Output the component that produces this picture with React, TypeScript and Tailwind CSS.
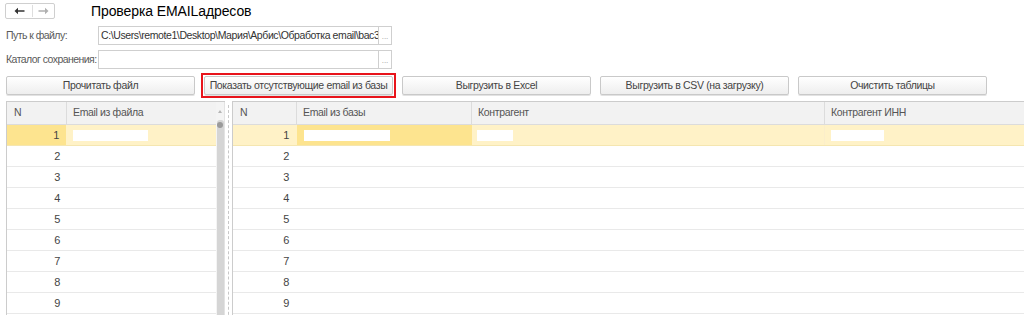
import React from "react";

const rows = [1, 2, 3, 4, 5, 6, 7, 8, 9, 10];

const Arrow = ({ dir, color }: { dir: "left" | "right"; color: string }) => (
  <svg width="11" height="8" viewBox="0 0 11 8">
    {dir === "left" ? (
      <path d="M0.5 4 L4 0.8 L4 3.2 L10.5 3.2 L10.5 4.8 L4 4.8 L4 7.2 Z" fill={color} />
    ) : (
      <path d="M10.5 4 L7 0.8 L7 3.2 L0.5 3.2 L0.5 4.8 L7 4.8 L7 7.2 Z" fill={color} />
    )}
  </svg>
);

const Btn = ({ label }: { label: string }) => (
  <div className="w-[189px] shrink-0 h-[19px] flex items-center justify-center whitespace-nowrap rounded-[2px] border border-[#c9c9c9] bg-gradient-to-b from-white to-[#eeeeee] text-[10.5px] tracking-[-0.35px] text-[#444] shadow-[0_1px_0_#e2e2e2]">
    {label}
  </div>
);

const PathField = ({ label, value }: { label: string; value: string }) => (
  <div className="flex items-center h-[19px]">
    <div className="w-[92px] text-[10.5px] tracking-[-0.55px] text-[#5a5a5a] whitespace-nowrap">{label}</div>
    <div className="w-[281px] h-full border border-[#cfcfcf] flex items-center pl-[2px] overflow-hidden whitespace-nowrap text-[10.5px] tracking-[-0.4px] text-[#333]">
      {value}
    </div>
    <div className="w-[13px] h-full border border-l-0 border-[#cfcfcf] flex items-end justify-center pb-[3px] text-[8px] leading-none text-[#999]">
      ...
    </div>
  </div>
);

const Blank = ({ w }: { w: number }) => (
  <div className="h-[11px] bg-white" style={{ width: w }} />
);

export default function App() {
  return (
    <div
      className="w-[1024px] h-[315px] overflow-hidden bg-white"
      style={{ fontFamily: '"Liberation Sans", Arial, sans-serif' }}
    >
      {/* top bar */}
      <div className="h-[26px] flex items-start pt-[3px] pl-[5px]">
        <div className="w-[50px] h-[16px] border border-[#cfcfcf] rounded-[2px] flex items-center bg-white">
          <div className="w-[27px] flex justify-center border-r border-[#dedede] h-[12px] items-center">
            <Arrow dir="left" color="#333" />
          </div>
          <div className="flex-1 flex justify-center">
            <Arrow dir="right" color="#b0b0b0" />
          </div>
        </div>
        <div className="ml-[36px] -mt-[1px] text-[14px] leading-[18px] tracking-[-0.1px] text-black">Проверка EMAILадресов</div>
      </div>

      {/* fields */}
      <div className="pl-[6px] flex flex-col gap-[5px]">
        <PathField
          label="Путь к файлу:"
          value="C:\Users\remote1\Desktop\Мария\Арбис\Обработка email\bac38"
        />
        <PathField label="Каталог сохранения:" value="" />
      </div>

      {/* buttons */}
      <div className="mt-[7px] pl-[6px] flex gap-[9px]">
        <Btn label="Прочитать файл" />
        <div className="relative shrink-0">
          <Btn label="Показать отсутствующие email из базы" />
          <div className="absolute -inset-[3px] border-2 border-[#e8141b] pointer-events-none" />
        </div>
        <Btn label="Выгрузить в Excel" />
        <Btn label="Выгрузить в CSV (на загрузку)" />
        <Btn label="Очистить таблицы" />
      </div>

      {/* tables */}
      <div className="mt-[6px] pl-[6px] flex text-[10.5px] tracking-[-0.35px] text-[#555]">
        {/* left table */}
        <div className="flex border-t border-l border-[#cccccc]">
          <div className="w-[209px]">
            <div className="h-[23px] flex bg-[#f2f2f2] border-b border-[#dcdcdc]">
              <div className="w-[60px] pl-[7px] flex items-center border-r border-[#dcdcdc]">N</div>
              <div className="flex-1 pl-[6px] flex items-center">Email из файла</div>
            </div>
            {rows.map((n) => (
              <div
                key={n}
                className={`h-[21px] flex border-b ${n === 1 ? "border-[#f5e6b0] bg-[#fff2c7]" : "border-[#e9e9e9]"}`}
              >
                <div
                  className={`w-[60px] pr-[7px] flex items-center justify-end text-[11px] text-[#444] ${n === 1 ? "bg-[#fde48f] border-r border-[#fff2c7]" : ""}`}
                >
                  {n < 10 ? n : ""}
                </div>
                <div className="flex-1 pl-[6px] flex items-center">{n === 1 && <Blank w={75} />}</div>
              </div>
            ))}
          </div>
          {/* scrollbar */}
          <div className="w-[8px] bg-[#f4f4f4] flex flex-col items-center">
            <div className="h-[18px] flex items-center justify-center">
              <div className="w-0 h-0 border-l-[2px] border-r-[2px] border-b-[3px] border-l-transparent border-r-transparent border-b-[#b5b5b5]" />
            </div>
            <div className="w-[7px] flex-1 bg-[#d5d5d5] rounded-t-[3px] flex flex-col items-center">
              <div className="mt-[2px] w-[6px] h-[6px] rounded-full bg-[#9a9a9a]" />
            </div>
          </div>
          <div className="w-[1px] bg-[#e3e3e3]" />
        </div>

        {/* splitter */}
        <div className="w-[7px] flex justify-center pt-[4px]">
          <div className="w-0 h-full border-l border-dashed border-[#c8c8c8]" />
        </div>

        {/* right table */}
        <div className="flex-1 border-t border-l border-[#cccccc]">
          <div className="h-[23px] flex bg-[#f2f2f2] border-b border-[#dcdcdc]">
            <div className="w-[64px] pl-[7px] flex items-center border-r border-[#dcdcdc]">N</div>
            <div className="w-[175px] pl-[6px] flex items-center border-r border-[#dcdcdc]">Email из базы</div>
            <div className="w-[353px] pl-[6px] flex items-center border-r border-[#dcdcdc]">Контрагент</div>
            <div className="flex-1 pl-[6px] flex items-center">Контрагент ИНН</div>
          </div>
          {rows.map((n) => (
            <div
              key={n}
              className={`h-[21px] flex border-b ${n === 1 ? "border-[#f5e6b0] bg-[#fff2c7]" : "border-[#e9e9e9]"}`}
            >
              <div className="w-[64px] pr-[8px] flex items-center justify-end text-[11px] text-[#444]">{n < 10 ? n : ""}</div>
              <div
                className={`w-[175px] pl-[7px] flex items-center ${n === 1 ? "bg-[#fde48f]" : ""}`}
              >
                {n === 1 && <Blank w={86} />}
              </div>
              <div className={`w-[353px] pl-[5px] flex items-center ${n === 1 ? "border-r border-[#fbeeca]" : ""}`}>
                {n === 1 && <Blank w={36} />}
              </div>
              <div className="flex-1 pl-[6px] flex items-center">{n === 1 && <Blank w={53} />}</div>
            </div>
          ))}
        </div>
      </div>
    </div>
  );
}
